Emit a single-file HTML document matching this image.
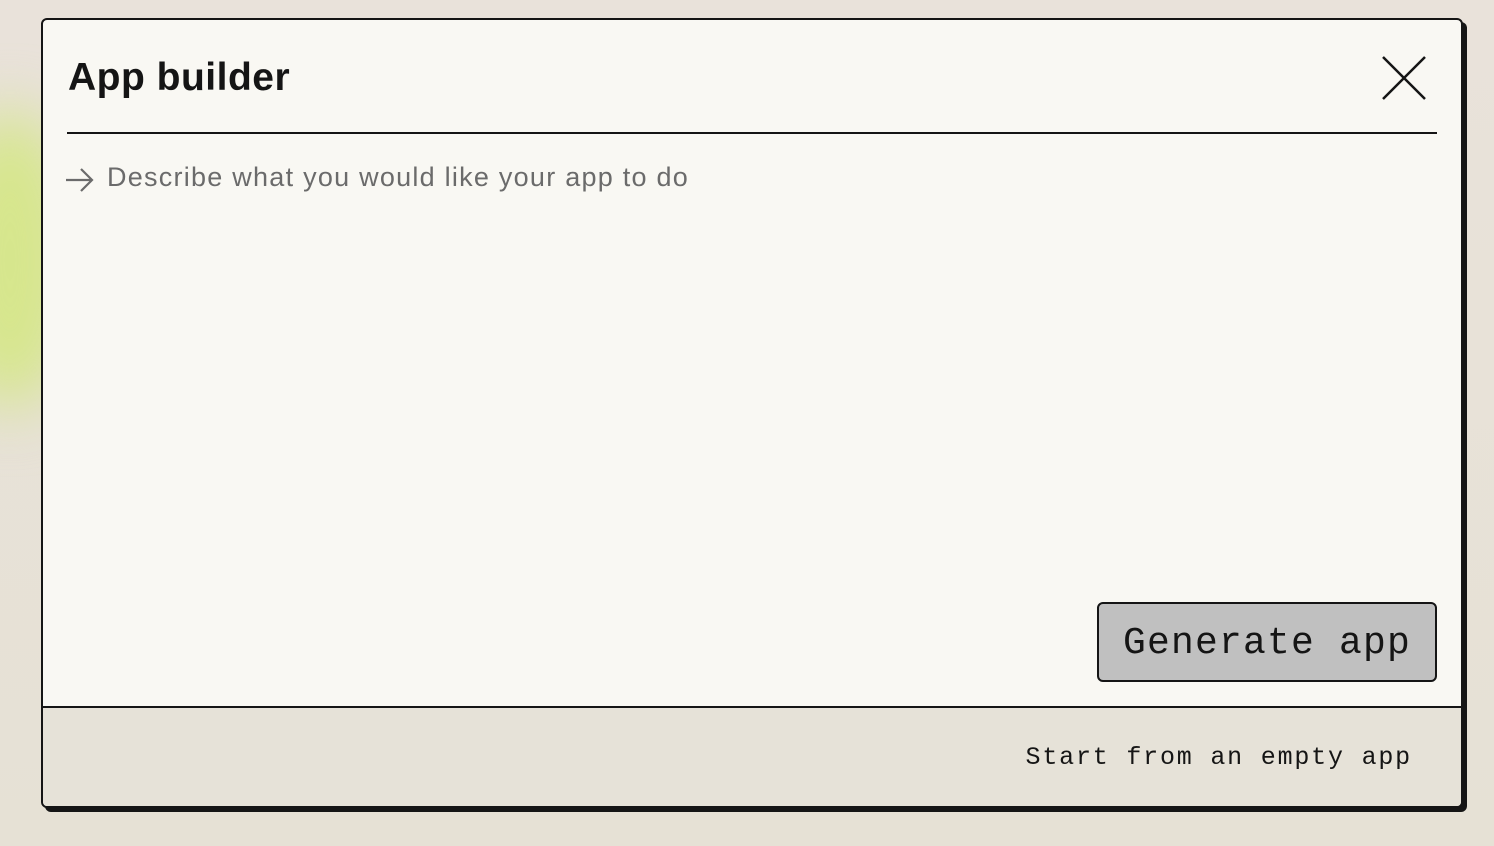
<!DOCTYPE html>
<html><head><style>
html,body{margin:0;padding:0;width:1494px;height:846px;overflow:hidden}
body{background:linear-gradient(180deg,#e9e2da 0%,#e6e1d5 100%);position:relative;font-family:"Liberation Sans",sans-serif}
.glow{position:absolute;left:-60px;top:110px;width:140px;height:300px;background:#d6e68c;filter:blur(30px);border-radius:50%}
.modal{position:absolute;left:41px;top:18px;width:1422px;height:790px;box-sizing:border-box;border:2px solid #151515;border-radius:6px;background:#f9f8f3;box-shadow:4px 4px 0 #151515;overflow:hidden}
h1{position:absolute;left:25px;top:36px;margin:0;font-size:39px;font-weight:bold;color:#151515;letter-spacing:0.5px}
.sep{position:absolute;left:24px;top:112px;width:1370px;height:2px;background:#151515}
.ph{position:absolute;left:64px;top:142px;font-size:27px;letter-spacing:1.25px;color:#6b6b6b}
.btn{position:absolute;left:1054px;top:582px;width:340px;height:80px;box-sizing:border-box;border:2px solid #151515;border-radius:6px;background:#c0c0c0;font-family:"Liberation Mono",monospace;font-size:38px;letter-spacing:1.2px;line-height:80px;text-align:center;color:#151515}
.foot{position:absolute;left:0;top:686px;width:100%;height:110px;background:#e6e2d8;border-top:2px solid #151515}
.ft{position:absolute;right:49px;top:35px;font-family:"Liberation Mono",monospace;font-size:25px;letter-spacing:1.8px;color:#151515}
</style></head><body>
<div class="glow"></div>
<div class="modal">
<h1>App builder</h1>
<svg style="position:absolute;left:1337px;top:34px" width="48" height="48"><path d="M3 3L45 45M45 3L3 45" stroke="#151515" stroke-width="2.5"/></svg>
<div class="sep"></div>
<svg style="position:absolute;left:22px;top:146px" width="30" height="30"><path d="M1 14H27M16 3L27 14L16 25" fill="none" stroke="#6b6b6b" stroke-width="2.2"/></svg>
<div class="ph">Describe what you would like your app to do</div>
<div class="btn">Generate app</div>
<div class="foot"><div class="ft">Start from an empty app</div></div>
</div>
</body></html>
